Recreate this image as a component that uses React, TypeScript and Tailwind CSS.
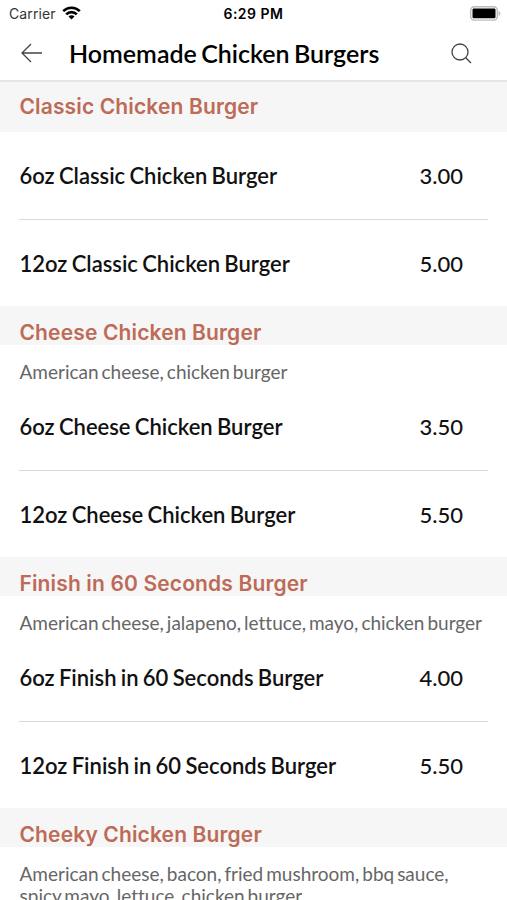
interface MenuItem {
  name: string;
  price: string;
}

interface MenuSection {
  title: string;
  description?: string;
  items: MenuItem[];
}

const sections: MenuSection[] = [
  {
    title: "Classic Chicken Burger",
    items: [
      { name: "6oz Classic Chicken Burger", price: "3.00" },
      { name: "12oz Classic Chicken Burger", price: "5.00" },
    ],
  },
  {
    title: "Cheese Chicken Burger",
    description: "American cheese, chicken burger",
    items: [
      { name: "6oz Cheese Chicken Burger", price: "3.50" },
      { name: "12oz Cheese Chicken Burger", price: "5.50" },
    ],
  },
  {
    title: "Finish in 60 Seconds Burger",
    description: "American cheese, jalapeno, lettuce, mayo, chicken burger",
    items: [
      { name: "6oz Finish in 60 Seconds Burger", price: "4.00" },
      { name: "12oz Finish in 60 Seconds Burger", price: "5.50" },
    ],
  },
  {
    title: "Cheeky Chicken Burger",
    description:
      "American cheese, bacon, fried mushroom, bbq sauce, spicy mayo, lettuce, chicken burger",
    items: [],
  },
];

export default function App() {
  return (
    <div className="flex h-[900px] w-[507px] flex-col overflow-hidden bg-white font-['Lato',sans-serif] text-[#111]">
      <StatusBar />
      <Header title="Homemade Chicken Burgers" />
      <main className="min-h-0 flex-1 overflow-hidden">
        {sections.map((section) => (
          <Section key={section.title} section={section} />
        ))}
      </main>
    </div>
  );
}

function StatusBar() {
  return (
    <div className="grid h-[27px] shrink-0 grid-cols-3 items-center pr-[6px] pl-[9px] font-['Inter',sans-serif] text-[14px]">
      <div className="flex items-center gap-[6px]">
        <span className="tracking-[0.1px] text-[#333]">Carrier</span>
        <svg className="mb-[2px]" width="19" height="14" viewBox="0 0 19 14" fill="none" stroke="#000" strokeWidth="2.6">
          <path d="M1.2 5.1a11.8 11.8 0 0 1 16.6 0" />
          <path d="M4.2 8.3a7.5 7.5 0 0 1 10.6 0" />
          <path d="M9.5 13.6 6.5 10.6a4.2 4.2 0 0 1 6 0z" fill="#000" stroke="none" />
        </svg>
      </div>
      <span className="-ml-[3px] text-center font-semibold tracking-[0.5px] text-black">6:29 PM</span>
      <svg className="justify-self-end" width="31" height="15" viewBox="0 0 31 15">
        <rect x="0.7" y="0.7" width="26.6" height="13.4" rx="3.6" fill="#fff" stroke="#bbb" strokeWidth="1.4" />
        <rect x="2.5" y="2.5" width="23" height="9.8" rx="1.2" fill="#000" />
        <path d="M28.6 5v4.8c1.1-.4 1.8-1.4 1.8-2.4S29.7 5.4 28.6 5z" fill="#bbb" />
      </svg>
    </div>
  );
}

function Header({ title }: { title: string }) {
  return (
    <header className="flex h-[55px] shrink-0 items-center border-b-2 border-[#e6e6e6] pr-[35px] pb-px pl-[21px]">
      <button type="button" aria-label="Back">
        <svg width="22" height="20" viewBox="0 0 22 20" fill="none" stroke="#444" strokeWidth="1.3">
          <path d="M21 10H1M10 1 1 10l9 9" />
        </svg>
      </button>
      <h1 className="ml-[26px] flex-1 pt-[2px] text-[25px] font-semibold whitespace-nowrap text-black [word-spacing:-1.9px]">
        {title}
      </h1>
      <button type="button" aria-label="Search">
        <svg width="21" height="21" viewBox="0 0 21 21" fill="none" stroke="#444" strokeWidth="1.3">
          <circle cx="9" cy="9" r="8" />
          <path d="m14.7 14.7 5.3 5.3" />
        </svg>
      </button>
    </header>
  );
}

function Section({ section }: { section: MenuSection }) {
  return (
    <section>
      <div
        className={
          section.description
            ? "-mt-px h-[39px] bg-[#f6f6f6] px-[19.5px] pt-[10.5px]"
            : "h-[50px] bg-[#f6f6f6] px-[19.5px] pt-[9px]"
        }
      >
        <h2 className="font-['Inter',sans-serif] text-[21px] leading-8 font-semibold tracking-[0.14px] text-[#bd6b57]">
          {section.title}
        </h2>
      </div>
      {section.description && (
        <p className="pt-4 pr-5 pl-[19.5px] text-[19px] leading-[22px] text-[#666] [font-variant-ligatures:none] [word-spacing:-1.9px]">
          {section.description}
        </p>
      )}
      {/* Items */}
      <ul className="mx-[19px]">
        {section.items.map((item) => (
          <li
            key={item.name}
            className="flex h-[87px] items-center justify-between pr-[25px] pl-[0.5px] text-[22px] first:h-[88px] first:border-b first:border-[#d9d9d9]"
          >
            <span className="font-semibold [word-spacing:-1.2px]">{item.name}</span>
            <span className="font-medium">{item.price}</span>
          </li>
        ))}
      </ul>
    </section>
  );
}
